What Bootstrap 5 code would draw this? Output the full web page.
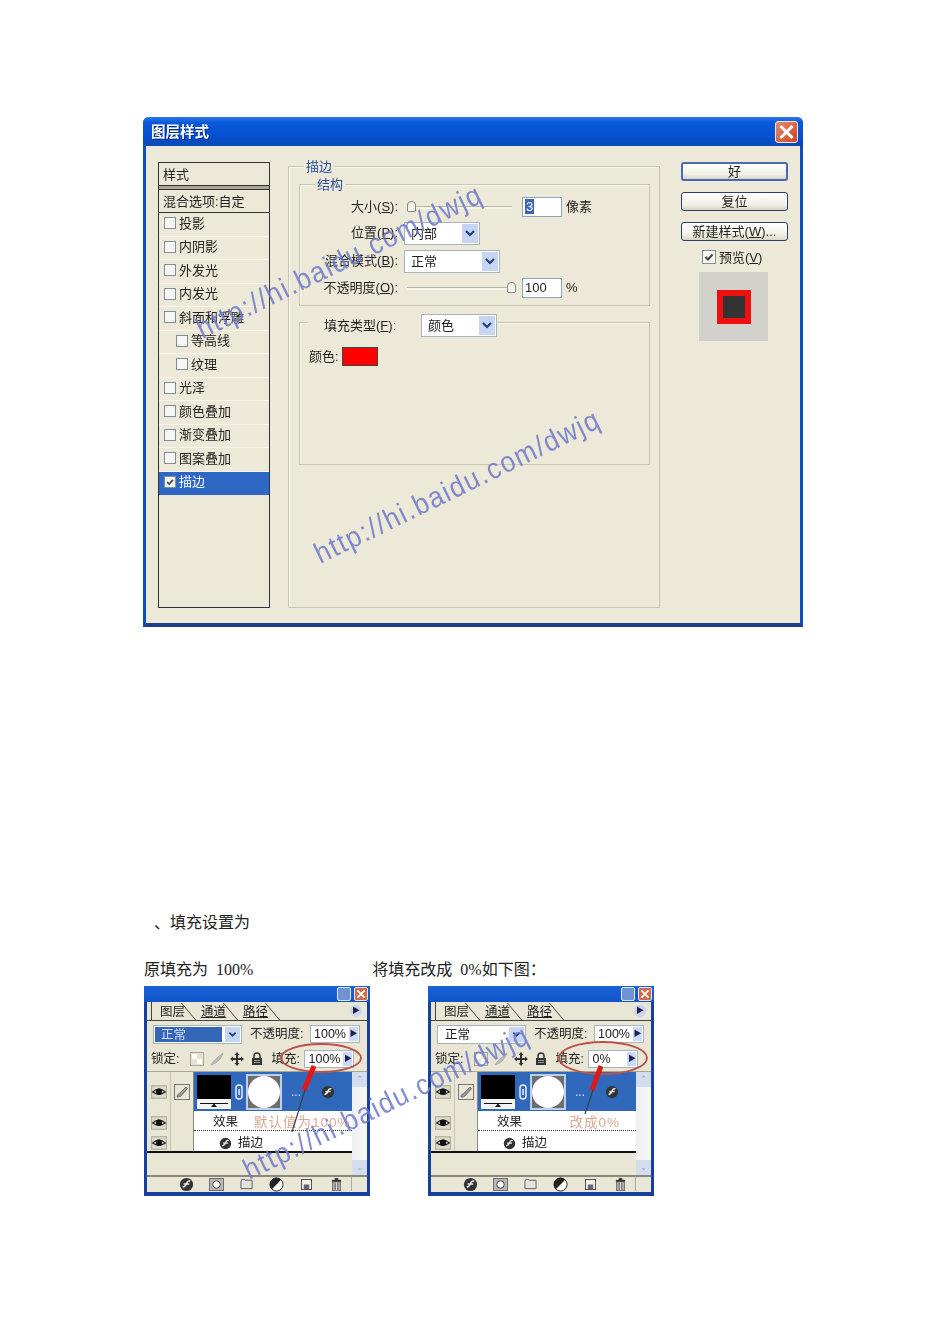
<!DOCTYPE html>
<html lang="zh">
<head>
<meta charset="utf-8">
<title>图层样式</title>
<link href="https://cdn.jsdelivr.net/npm/bootstrap@5.3.0/dist/css/bootstrap.min.css" rel="stylesheet">
<style>
html,body{margin:0;background:#fff;}
body{width:950px;height:1344px;overflow:hidden;position:relative;font-family:"Liberation Sans","Noto Sans CJK SC",sans-serif;color:#222;}
.sheet{padding:117px 0 0 143px;position:relative;}
.dlg{width:660px;height:510px;background:#ece9d8;border:solid #0c4fc0;border-width:0 3px 4px;border-bottom-color:#1c3f8c;border-radius:6px 6px 0 0;font-size:13px;line-height:1;filter:blur(.45px);}
.dlg-bar{height:29px;margin:0 -3px;background:linear-gradient(#2a78e8,#0a58d8 20%,#0450d0 70%,#0a48b0);border-radius:6px 6px 0 0;color:#fff;font-weight:700;font-size:14.5px;padding:1px 5px 0 8px;text-shadow:1px 1px 0 #0a2c80;}
.dlg-x{width:23px;height:22px;border:1px solid #f2e8e0;border-radius:3px;background:linear-gradient(135deg,#e8876a,#c9482a);}
.dlg-main{padding:16px 0 0 12px;}
.fx-list{width:112px;height:446px;border:1px solid #333;flex:none;}
.fx-head{height:23px;padding-left:4px;border-bottom:1px solid #333;}
.fx-gap{height:4px;background:#aaa79a;border-bottom:1px solid #333;}
.fx-blend{height:23px;padding-left:4px;border-bottom:1px solid #333;}
.fx-item{height:23.5px;padding:0 0 2px 5px;gap:3px;border-bottom:1px solid #f7f5ea;}
.fx-sub{padding-left:17px;}
.fx-on{background:#2f68c4;color:#fff;border-color:#2f68c4;}
.cbx{width:12px;height:12px;flex:none;background:#f7f6f0;border:1px solid #7f8f9f;}
.cbx-on{background:#f4f4ee;}
.frame{border:1px solid #c6c4b2;box-shadow:1px 1px 0 #faf9f0 inset;position:relative;}
.frame-outer{width:372px;height:442px;margin:4px 0 0 18px;padding:17px 0 0 10px;flex:none;}
.frame-title{position:absolute;top:-7px;left:15px;background:#ece9d8;color:#2c4f9c;padding:0 2px;}
.frame-struct{width:351px;height:122px;padding:12px 0 0;}
.frame-fill{width:351px;height:143px;margin-top:16px;}
.field-row{margin-bottom:5px;}
.field-row>span{padding-bottom:2px;}
.lbl{width:98px;text-align:right;flex:none;}
.slider{height:3px;margin-left:9px;background:#f6f5ec;border-top:1px solid #b8b6a4;position:relative;flex:none;}
.slider-a{width:105px;margin-right:10px;}
.slider-b{width:109px;margin-right:6px;}
.thumb{position:absolute;width:9px;height:11px;top:-6px;background:#f4f3ea;border:1px solid #888;border-radius:4px 4px 1px 1px;}
.thumb-l{left:0;}
.thumb-r{right:0;}
.numbox{width:40px;height:20px;background:#fff;border:1px solid #8ea4bc;padding:2px 0 0 2px;flex:none;}
.sel{height:23px;background:#fff;border:1px solid #a8b4bc;padding-left:6px;flex:none;margin-left:6px;}
.sel-76{width:76px;}
.sel-96{width:96px;}
.sel-arrow{width:16px;height:19px;margin-left:auto;margin-right:1px;background:#c6d6f2;}
.sel-sel{background:#3a66b8;color:#fff;padding:0 1px;}
.fill-row{margin:-9px 0 0 8px;width:189px;background:#ece9d8;}
.fill-row .sel{margin-left:auto;}
.color-row{margin:10px 0 0 9px;gap:3px;}
.swatch{width:36px;height:19px;background:#f00;border:1px solid #444;}
.side{width:107px;margin:0 0 0 21px;flex:none;gap:11px;}
.xpbtn{height:19px;padding:0;font-size:13px;line-height:1;color:#222;background:linear-gradient(#fff,#f0efe6 70%,#d8d4c4);border:1px solid #2c3e6a;border-radius:3px;}
.xpbtn-def{border:2px solid #4a6ab0;}
.prev-row{margin:-2px 0 0 21px;gap:3px;}
.prev-row .cbx{width:14px;height:14px;}
.preview{width:69px;height:69px;background:#d2d1cb;margin:-3px 0 0 18px;}
.preview-red{width:34px;height:34px;background:#ee1010;padding:6px;}
.preview-in{width:100%;height:100%;background:#333;}
.wm{position:absolute;white-space:nowrap;font-family:"Liberation Sans",sans-serif;font-size:29px;letter-spacing:1.7px;color:#6e78cc;transform:rotate(-26deg) scaleX(.91);transform-origin:0 50%;line-height:1;opacity:.85;}
.wm-a{left:198px;top:316px;}
.wm-b{left:316px;top:541px;}
.wm-c{left:245px;top:1157px;}
.doc-line{font-family:"Liberation Serif","Noto Sans CJK SC",serif;font-size:16px;line-height:20px;color:#222;word-spacing:4px;}
.l1{margin:286px 0 0 11px;}
.l2{margin:27px 0 0 1px;}
.l2 span+span{margin-left:119px;}
.panels{margin:6px 0 0 1px;gap:58px;}
.psp{width:226px;height:210px;border:solid #16409c;border-width:0 3px 4px;background:#e9e6d6;position:relative;font-size:12.5px;line-height:1;color:#222;filter:blur(.45px);}
.psp-bar{height:16px;margin:0 -3px;background:linear-gradient(#1a62d8,#0f55c6);padding:1px 2px 0 0;gap:3px;}
.psp-min,.psp-cls{width:14px;height:14px;border:1px solid #dfe8f5;border-radius:2px;}
.psp-min{background:#6d93d0;}
.psp-cls{background:#d06a4a;}
.tabs{height:19px;border-bottom:1px solid #444;padding-left:4px;}
.tab{position:relative;width:42px;padding-left:8px;height:18px;line-height:21px;}
.tab::after{content:"";position:absolute;right:4px;top:1px;bottom:0;border-right:1px solid #444;transform:skewX(40deg);}
.tab:first-child{border-left:1px solid #444;}
.tab-u{text-decoration:underline;}
.tab-more{margin:0 5px 0 auto;width:12px;height:12px;border-radius:50%;background:#c9d6f0;color:#224;font-size:8px;line-height:12px;text-align:center;}
.ctl1{height:26px;padding-left:6px;}
.ctl2{height:25px;padding-left:4px;border-bottom:1px solid #a8a696;}
.mode{width:89px;height:19px;background:#fff;border:1px solid #a8b4bc;padding:1px;flex:none;}
.mode-txt{flex:1;height:100%;padding-left:6px;line-height:16px;}
.mode-on{background:#3566b8;color:#cfe0ff;}
.mode-arrow{width:15px;height:100%;background:#c6d6f2;margin-left:3px;}
.pct{width:50px;height:18px;background:#fff;border:1px solid #a8b4bc;padding-left:3px;line-height:16px;position:relative;flex:none;}
.pct i{position:absolute;right:1px;top:1px;bottom:1px;width:9px;background:#cbdaf4;font-style:normal;font-size:8px;line-height:13px;text-align:center;color:#225;}
.lbl-op{margin-left:8px;width:60px;}
.lbl-fill{width:33px;}
.lockico{width:20px;text-align:center;}
.plist{height:103px;}
.plist-main{flex:1;min-width:0;}
.plist-rows{height:81px;border-bottom:2px solid #111;}
.col-eye{width:24px;flex:none;border-right:1px solid #c6c4b2;}
.cell-a{height:39px;}
.cell-b{height:20px;padding-top:4px;}
.col-brush{width:23px;flex:none;border-right:1px solid #8a8a80;}
.layers{flex:1;min-width:0;}
.layer-row{height:39px;background:#3068bc;padding-left:3px;color:#d8e4f8;}
.linkico{width:15px;text-align:center;}
.th-mask{width:36px;height:36px;background:#fff;border:2px solid #bcd0ea;}
.dots{margin:0 4px 0 9px;font-size:12px;}
.effect{height:20px;background:#fff;padding:4px 0 0 19px;position:relative;}
.effect-a{border-bottom:1px dotted #333;}
.effect-note{color:#dca78e;letter-spacing:1px;font-size:13.5px;}
.effect-b{padding-left:25px;gap:6px;}
.pscroll{width:15px;flex:none;background:linear-gradient(90deg,#eef0f4,#f6f6f2);}
.pscroll i{height:15px;background:#d4ddee;font-style:normal;color:#9aa;font-size:9px;line-height:15px;text-align:center;}
.pfoot{height:16px;border-top:2px solid #8a8878;padding:0 2px 0 24px;}
.pfoot-ico{width:30px;text-align:center;}
.grip{margin-left:auto;width:14px;height:14px;border-left:1px solid #aaa;background:#e8e6d6;}
.over{position:absolute;left:0;top:0;width:100%;height:100%;pointer-events:none;}
svg{display:block;}
.ic{margin:auto;}
</style>
</head>
<body>
<svg width="0" height="0" class="position-absolute">
  <symbol id="i-eye" viewBox="0 0 14 14"><rect x=".5" y="1.5" width="13" height="11" fill="#dcd9c8" stroke="#b0ae9e"/><path d="M1.500 7Q7 2 12.500 7Q7 11 1.500 7Z" fill="#fff" stroke="#222"/><circle cx="7" cy="6.800" r="2.800" fill="#111"/></symbol>
  <symbol id="i-brush" viewBox="0 0 16 16"><rect x=".5" y=".5" width="15" height="15" fill="#e8e6d6" stroke="#777"/><path d="M3 13C3 10 5 10 6 9L12 3L13.500 4.500L8 11C7 12 5 13.500 3 13Z" fill="#9a9a9a" stroke="#555" stroke-width=".7"/></symbol>
  <symbol id="i-fx" viewBox="0 0 16 16"><circle cx="8" cy="8" r="7" fill="#333"/><path d="M4 11C7 10 8 8 8.500 6C9 4.500 10.500 4 12 4.500M5 7.500H11" fill="none" stroke="#eee" stroke-width="1.600"/></symbol>
  <symbol id="i-check" viewBox="0 0 12 12"><path d="M2.500 6L5 8.500L9.500 3.500" fill="none" stroke="#444" stroke-width="2"/></symbol>
  <symbol id="i-chev" viewBox="0 0 16 19"><path d="M4 7L8 11L12 7" fill="none" stroke="#24407c" stroke-width="2.200"/></symbol>
  <symbol id="i-chk" viewBox="0 0 14 14"><rect x=".5" y=".5" width="13" height="13" fill="#e4e2d2" stroke="#a8a898"/><rect x="2" y="2" width="5" height="5" fill="#fff"/><rect x="7" y="7" width="5" height="5" fill="#fff"/></symbol>
  <symbol id="i-pen" viewBox="0 0 14 14"><path d="M1 13C3 9 7 6 13 1C11 7 7 11 1 13Z" fill="#bbb" stroke="#999" stroke-width=".6"/></symbol>
  <symbol id="i-move" viewBox="0 0 14 14"><path d="M7 0L9.500 3H8V6H11V4.500L14 7L11 9.500V8H8V11H9.500L7 14L4.500 11H6V8H3V9.500L0 7L3 4.500V6H6V3H4.500Z" fill="#333"/></symbol>
  <symbol id="i-lock" viewBox="0 0 12 14"><path d="M3 6V4a3 3 0 0 1 6 0V6" fill="none" stroke="#333" stroke-width="1.500"/><rect x="1" y="6" width="10" height="7" fill="#333"/><rect x="3" y="8" width="6" height="1" fill="#999"/><rect x="3" y="10" width="6" height="1" fill="#999"/></symbol>
  <symbol id="i-mask" viewBox="0 0 16 14"><rect x=".5" y=".5" width="15" height="13" fill="#b8b8b0" stroke="#667"/><circle cx="8" cy="7" r="4" fill="#fff" stroke="#333"/></symbol>
  <symbol id="i-folder" viewBox="0 0 14 12"><path d="M1 3V11H13V2H6L5 1H2Z" fill="#e4e4dc" stroke="#556"/></symbol>
  <symbol id="i-half" viewBox="0 0 16 16"><circle cx="8" cy="8" r="7" fill="#fff" stroke="#222"/><path d="M13 3L3 13A7 7 0 0 1 13 3Z" fill="#222"/></symbol>
  <symbol id="i-new" viewBox="0 0 12 12"><rect x=".5" y=".5" width="11" height="11" fill="#f2f2ea" stroke="#445"/><rect x="3" y="6" width="6" height="5" fill="#667"/></symbol>
  <symbol id="i-trash" viewBox="0 0 12 14"><rect x="1" y="2" width="10" height="2" fill="#333"/><rect x="4" y="0" width="4" height="2" fill="#333"/><rect x="2" y="4" width="8" height="10" fill="#ddd" stroke="#333"/><path d="M4.500 5V13M7.500 5V13" stroke="#333"/></symbol>
  <symbol id="i-x" viewBox="0 0 20 20"><path d="M4 4L16 16M16 4L4 16" stroke="#fff" stroke-width="3"/></symbol>
  <symbol id="i-thumb" viewBox="0 0 34 34"><rect width="34" height="34" fill="#000"/><rect y="24" width="34" height="10" fill="#f4f4f4"/><rect x="3" y="28" width="28" height="1" fill="#111"/><path d="M14 32L17 28.500L20 32Z" fill="#111"/></symbol>
  <symbol id="i-maskth" viewBox="0 0 32 32"><rect width="32" height="32" fill="#6e6e6e"/><circle cx="16" cy="16" r="16" fill="#fff"/></symbol>
  <symbol id="i-link" viewBox="0 0 8 16"><rect x="1" y="1" width="6" height="14" rx="3" fill="none" stroke="#e8eefa" stroke-width="1.500"/><rect x="3.300" y="5" width="1.500" height="6" fill="#e8eefa"/></symbol>
</svg>

<div class="sheet">
  <section class="dlg">
    <div class="dlg-bar d-flex align-items-center justify-content-between">
      <span>图层样式</span>
      <span class="dlg-x"><svg width="21" height="20"><use href="#i-x"/></svg></span>
    </div>
    <div class="dlg-main d-flex">
      <div class="fx-list">
        <div class="fx-head d-flex align-items-center">样式</div>
        <div class="fx-gap"></div>
        <div class="fx-blend d-flex align-items-center">混合选项:自定</div>
        <div class="fx-item d-flex align-items-center"><span class="cbx"></span>投影</div>
        <div class="fx-item d-flex align-items-center"><span class="cbx"></span>内阴影</div>
        <div class="fx-item d-flex align-items-center"><span class="cbx"></span>外发光</div>
        <div class="fx-item d-flex align-items-center"><span class="cbx"></span>内发光</div>
        <div class="fx-item d-flex align-items-center"><span class="cbx"></span>斜面和浮雕</div>
        <div class="fx-item fx-sub d-flex align-items-center"><span class="cbx"></span>等高线</div>
        <div class="fx-item fx-sub d-flex align-items-center"><span class="cbx"></span>纹理</div>
        <div class="fx-item d-flex align-items-center"><span class="cbx"></span>光泽</div>
        <div class="fx-item d-flex align-items-center"><span class="cbx"></span>颜色叠加</div>
        <div class="fx-item d-flex align-items-center"><span class="cbx"></span>渐变叠加</div>
        <div class="fx-item d-flex align-items-center"><span class="cbx"></span>图案叠加</div>
        <div class="fx-item fx-on d-flex align-items-center"><span class="cbx cbx-on"><svg width="10" height="10"><use href="#i-check"/></svg></span>描边</div>
      </div>

      <div class="frame frame-outer">
        <span class="frame-title">描边</span>
        <div class="frame frame-struct">
          <span class="frame-title">结构</span>
          <div class="field-row d-flex align-items-center">
            <span class="lbl">大小(<u>S</u>):</span>
            <div class="slider slider-a"><span class="thumb thumb-l"></span></div>
            <div class="numbox"><span class="sel-sel">3</span></div>
            <span class="ms-1">像素</span>
          </div>
          <div class="field-row d-flex align-items-center">
            <span class="lbl">位置(<u>P</u>):</span>
            <div class="sel sel-76 d-flex align-items-center"><span>内部</span><span class="sel-arrow"><svg width="16" height="19"><use href="#i-chev"/></svg></span></div>
          </div>
          <div class="field-row d-flex align-items-center">
            <span class="lbl">混合模式(<u>B</u>):</span>
            <div class="sel sel-96 d-flex align-items-center"><span>正常</span><span class="sel-arrow"><svg width="16" height="19"><use href="#i-chev"/></svg></span></div>
          </div>
          <div class="field-row d-flex align-items-center">
            <span class="lbl">不透明度(<u>O</u>):</span>
            <div class="slider slider-b"><span class="thumb thumb-r"></span></div>
            <div class="numbox">100</div>
            <span class="ms-1">%</span>
          </div>
        </div>
        <div class="frame frame-fill">
          <div class="fill-row d-flex align-items-center">
            <span class="ps-3">填充类型(<u>F</u>):</span>
            <div class="sel sel-76 d-flex align-items-center"><span>颜色</span><span class="sel-arrow"><svg width="16" height="19"><use href="#i-chev"/></svg></span></div>
          </div>
          <div class="color-row d-flex align-items-center"><span>颜色:</span><span class="swatch"></span></div>
        </div>
      </div>

      <div class="side d-flex flex-column">
        <button type="button" class="btn xpbtn xpbtn-def">好</button>
        <button type="button" class="btn xpbtn">复位</button>
        <button type="button" class="btn xpbtn text-nowrap">新建样式(<u>W</u>)...</button>
        <div class="prev-row d-flex align-items-center"><span class="cbx"><svg width="12" height="12"><use href="#i-check"/></svg></span><span>预览(<u>V</u>)</span></div>
        <div class="preview d-flex align-items-center justify-content-center"><div class="preview-red"><div class="preview-in"></div></div></div>
      </div>
    </div>
  </section>

  <p class="doc-line l1 mb-0">、填充设置为</p>
  <p class="doc-line l2 mb-0"><span>原填充为 100%</span><span>将填充改成 0%如下图：</span></p>

  <div class="panels d-flex">
    <section class="psp">
      <div class="psp-bar d-flex justify-content-end"><span class="psp-min"></span><span class="psp-cls"><svg width="12" height="12"><use href="#i-x"/></svg></span></div>
      <div class="tabs d-flex align-items-center"><span class="tab">图层</span><span class="tab tab-u">通道</span><span class="tab tab-u">路径</span><span class="tab-more">&#9654;</span></div>
      <div class="ctl1 d-flex align-items-center">
        <div class="mode d-flex"><span class="mode-txt mode-on">正常</span><span class="mode-arrow"><svg width="15" height="15"><use href="#i-chev"/></svg></span></div>
        <span class="lbl-op">不透明度:</span>
        <span class="pct">100%<i>&#9654;</i></span>
      </div>
      <div class="ctl2 d-flex align-items-center">
        <span>锁定:</span>
        <span class="lockico ms-2"><svg class="ic" width="14" height="14"><use href="#i-chk"/></svg></span>
        <span class="lockico"><svg class="ic" width="14" height="14"><use href="#i-pen"/></svg></span>
        <span class="lockico"><svg class="ic" width="14" height="14"><use href="#i-move"/></svg></span>
        <span class="lockico"><svg class="ic" width="12" height="14"><use href="#i-lock"/></svg></span>
        <span class="lbl-fill ms-1">填充:</span>
        <span class="pct">100%<i>&#9654;</i></span>
      </div>
      <div class="plist d-flex">
        <div class="plist-main">
          <div class="plist-rows d-flex">
            <div class="col-eye d-flex flex-column">
              <div class="cell-a d-flex align-items-center justify-content-center"><svg width="16" height="16"><use href="#i-eye"/></svg></div>
              <div class="cell-b d-flex align-items-center justify-content-center"><svg width="16" height="16"><use href="#i-eye"/></svg></div>
              <div class="cell-b d-flex align-items-center justify-content-center"><svg width="16" height="16"><use href="#i-eye"/></svg></div>
            </div>
            <div class="col-brush"><div class="cell-a d-flex align-items-center justify-content-center"><svg width="16" height="16"><use href="#i-brush"/></svg></div></div>
            <div class="layers">
              <div class="layer-row d-flex align-items-center">
                <svg width="34" height="34"><use href="#i-thumb"/></svg>
                <span class="linkico"><svg class="ic" width="8" height="16"><use href="#i-link"/></svg></span>
                <span class="th-mask"><svg width="32" height="32"><use href="#i-maskth"/></svg></span>
                <span class="dots">...</span>
                <svg class="ms-3" width="14" height="14"><use href="#i-fx"/></svg>
              </div>
              <div class="effect effect-a d-flex align-items-center"><span>效果</span><span class="effect-note ms-3">默认值为100%</span></div>
              <div class="effect effect-b d-flex align-items-center"><svg width="13" height="13"><use href="#i-fx"/></svg><span>描边</span></div>
            </div>
          </div>
        </div>
        <div class="pscroll d-flex flex-column justify-content-between"><i>&#8963;</i><i>&#8964;</i></div>
      </div>
      <div class="pfoot d-flex align-items-center">
        <span class="pfoot-ico"><svg class="ic" width="15" height="15"><use href="#i-fx"/></svg></span>
        <span class="pfoot-ico"><svg class="ic" width="15" height="13"><use href="#i-mask"/></svg></span>
        <span class="pfoot-ico"><svg class="ic" width="13" height="12"><use href="#i-folder"/></svg></span>
        <span class="pfoot-ico"><svg class="ic" width="15" height="15"><use href="#i-half"/></svg></span>
        <span class="pfoot-ico"><svg class="ic" width="11" height="11"><use href="#i-new"/></svg></span>
        <span class="pfoot-ico"><svg class="ic" width="11" height="13"><use href="#i-trash"/></svg></span>
        <span class="grip"></span>
      </div>
      <svg class="over" viewBox="0 0 220 206" preserveAspectRatio="none"><ellipse cx="174" cy="72" rx="40" ry="14" fill="none" stroke="#bd5048" stroke-width="1.800"/><path d="M167 80L157 104" stroke="#e01818" stroke-width="5"/><path d="M158 104L145 146" stroke="#344" stroke-width="1.200"/></svg>
    </section>

    <section class="psp">
      <div class="psp-bar d-flex justify-content-end"><span class="psp-min"></span><span class="psp-cls"><svg width="12" height="12"><use href="#i-x"/></svg></span></div>
      <div class="tabs d-flex align-items-center"><span class="tab">图层</span><span class="tab tab-u">通道</span><span class="tab tab-u">路径</span><span class="tab-more">&#9654;</span></div>
      <div class="ctl1 d-flex align-items-center">
        <div class="mode d-flex"><span class="mode-txt">正常</span><span class="mode-arrow"><svg width="15" height="15"><use href="#i-chev"/></svg></span></div>
        <span class="lbl-op">不透明度:</span>
        <span class="pct">100%<i>&#9654;</i></span>
      </div>
      <div class="ctl2 d-flex align-items-center">
        <span>锁定:</span>
        <span class="lockico ms-2"><svg class="ic" width="14" height="14"><use href="#i-chk"/></svg></span>
        <span class="lockico"><svg class="ic" width="14" height="14"><use href="#i-pen"/></svg></span>
        <span class="lockico"><svg class="ic" width="14" height="14"><use href="#i-move"/></svg></span>
        <span class="lockico"><svg class="ic" width="12" height="14"><use href="#i-lock"/></svg></span>
        <span class="lbl-fill ms-1">填充:</span>
        <span class="pct">0%<i>&#9654;</i></span>
      </div>
      <div class="plist d-flex">
        <div class="plist-main">
          <div class="plist-rows d-flex">
            <div class="col-eye d-flex flex-column">
              <div class="cell-a d-flex align-items-center justify-content-center"><svg width="16" height="16"><use href="#i-eye"/></svg></div>
              <div class="cell-b d-flex align-items-center justify-content-center"><svg width="16" height="16"><use href="#i-eye"/></svg></div>
              <div class="cell-b d-flex align-items-center justify-content-center"><svg width="16" height="16"><use href="#i-eye"/></svg></div>
            </div>
            <div class="col-brush"><div class="cell-a d-flex align-items-center justify-content-center"><svg width="16" height="16"><use href="#i-brush"/></svg></div></div>
            <div class="layers">
              <div class="layer-row d-flex align-items-center">
                <svg width="34" height="34"><use href="#i-thumb"/></svg>
                <span class="linkico"><svg class="ic" width="8" height="16"><use href="#i-link"/></svg></span>
                <span class="th-mask"><svg width="32" height="32"><use href="#i-maskth"/></svg></span>
                <span class="dots">...</span>
                <svg class="ms-3" width="14" height="14"><use href="#i-fx"/></svg>
              </div>
              <div class="effect effect-a d-flex align-items-center"><span>效果</span><span class="effect-note ms-auto me-3">改成0%</span></div>
              <div class="effect effect-b d-flex align-items-center"><svg width="13" height="13"><use href="#i-fx"/></svg><span>描边</span></div>
            </div>
          </div>
        </div>
        <div class="pscroll d-flex flex-column justify-content-between"><i>&#8963;</i><i>&#8964;</i></div>
      </div>
      <div class="pfoot d-flex align-items-center">
        <span class="pfoot-ico"><svg class="ic" width="15" height="15"><use href="#i-fx"/></svg></span>
        <span class="pfoot-ico"><svg class="ic" width="15" height="13"><use href="#i-mask"/></svg></span>
        <span class="pfoot-ico"><svg class="ic" width="13" height="12"><use href="#i-folder"/></svg></span>
        <span class="pfoot-ico"><svg class="ic" width="15" height="15"><use href="#i-half"/></svg></span>
        <span class="pfoot-ico"><svg class="ic" width="11" height="11"><use href="#i-new"/></svg></span>
        <span class="pfoot-ico"><svg class="ic" width="11" height="13"><use href="#i-trash"/></svg></span>
        <span class="grip"></span>
      </div>
      <svg class="over" viewBox="0 0 220 206" preserveAspectRatio="none"><ellipse cx="172" cy="72" rx="44" ry="16" fill="none" stroke="#bd5048" stroke-width="1.800"/><path d="M170 80L161 104" stroke="#e01818" stroke-width="5"/><path d="M162 104L154 128" stroke="#344" stroke-width="1.200"/></svg>
    </section>
  </div>

  <span class="wm wm-a">http://hi.baidu.com/dwjq</span>
  <span class="wm wm-b">http://hi.baidu.com/dwjq</span>
  <span class="wm wm-c">http://hi.baidu.com/dwjq</span>
</div>
<script src="https://cdn.jsdelivr.net/npm/bootstrap@5.3.0/dist/js/bootstrap.bundle.min.js"></script>
</body>
</html>
